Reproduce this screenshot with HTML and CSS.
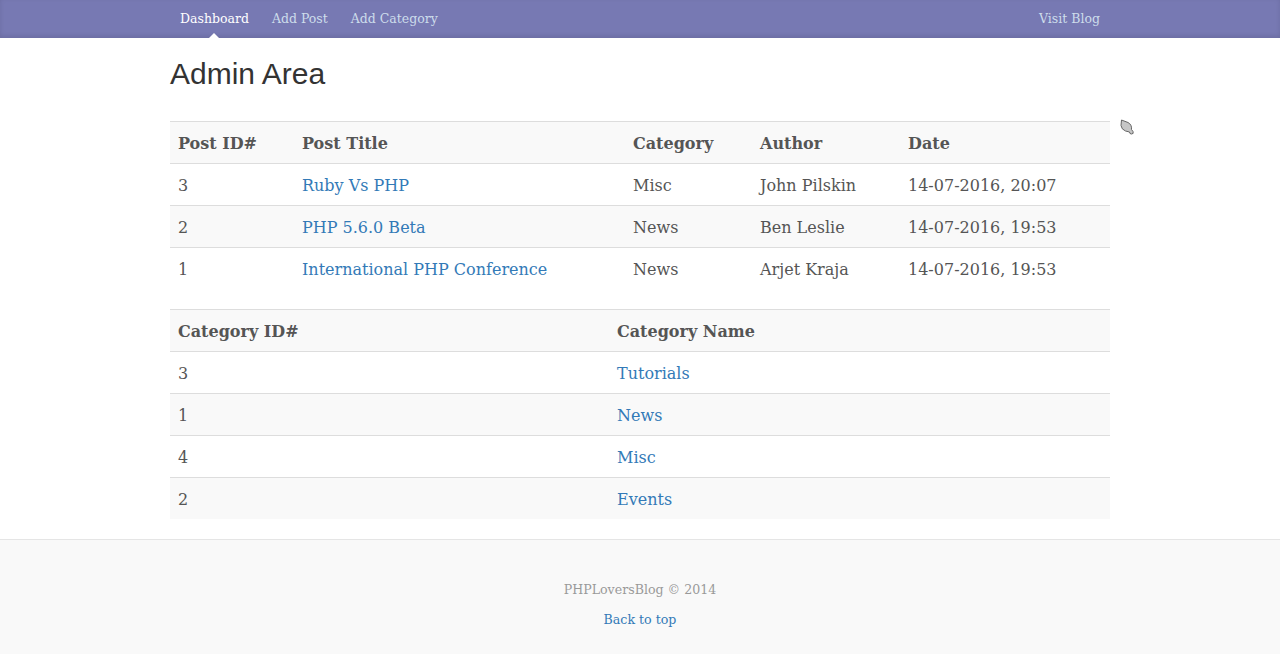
FILE: index.html
```html
<!DOCTYPE html>
<html lang="en">
<head>
<meta charset="utf-8">
<title>Admin Area</title>
<link rel="stylesheet" href="styles.css">
</head>
<body>
<div class="masthead">
  <nav class="container nav">
    <a class="nav-item active" href="#">Dashboard</a>
    <a class="nav-item" href="#">Add Post</a>
    <a class="nav-item" href="#">Add Category</a>
    <a class="nav-item nav-right" href="#">Visit Blog</a>
  </nav>
</div>

<main class="container">
  <h1 class="page-title">Admin Area</h1>

  <table class="table">
    <colgroup>
      <col class="c-id"><col class="c-title"><col class="c-cat"><col class="c-author"><col class="c-date">
    </colgroup>
    <tr><th>Post ID#</th><th>Post Title</th><th>Category</th><th>Author</th><th>Date</th></tr>
    <tr><td>3</td><td><a href="#">Ruby Vs PHP</a></td><td>Misc</td><td>John Pilskin</td><td>14-07-2016, 20:07</td></tr>
    <tr><td>2</td><td><a href="#">PHP 5.6.0 Beta</a></td><td>News</td><td>Ben Leslie</td><td>14-07-2016, 19:53</td></tr>
    <tr><td>1</td><td><a href="#">International PHP Conference</a></td><td>News</td><td>Arjet Kraja</td><td>14-07-2016, 19:53</td></tr>
  </table>

  <table class="table">
    <colgroup>
      <col class="c-catid"><col class="c-catname">
    </colgroup>
    <tr><th>Category ID#</th><th>Category Name</th></tr>
    <tr><td>3</td><td><a href="#">Tutorials</a></td></tr>
    <tr><td>1</td><td><a href="#">News</a></td></tr>
    <tr><td>4</td><td><a href="#">Misc</a></td></tr>
    <tr><td>2</td><td><a href="#">Events</a></td></tr>
  </table>
</main>

<footer class="footer">
  <p>PHPLoversBlog © 2014</p>
  <p><a href="#">Back to top</a></p>
</footer>

<svg class="cursor" width="18" height="22" viewBox="0 0 18 22" aria-hidden="true">
  <path d="M2.5 2 L9 4.5 Q13 6.5 12.5 11.5 L14 13.5 Q15 16 12.5 16 Q10.5 16 10.5 14 L6.5 13 Q2.5 11.5 2 7.5 Z" fill="#c6c6c6" stroke="#666" stroke-width="1"/>
</svg>
</body>
</html>
```

FILE: styles.css
```css
* { box-sizing: border-box; }

body {
  margin: 0;
  font-family: "DejaVu Serif", "Liberation Serif", serif;
  color: #555;
  background: #fff;
}

.container {
  width: 940px;
  margin: 0 auto;
}

.masthead {
  background: #7779b3;
  height: 38px;
  box-shadow: inset 0 -2px 5px rgba(0, 0, 0, 0.1);
}

.nav {
  display: flex;
  gap: 3px;
  height: 38px;
  align-items: stretch;
}

.nav-item {
  position: relative;
  display: block;
  padding: 10px 10px;
  line-height: 18px;
  font-size: 12.5px;
  color: #cdddeb;
  text-decoration: none;
}

.nav-item.active {
  color: #fff;
}

.nav-item.active::after {
  content: "";
  position: absolute;
  bottom: 0;
  left: 50%;
  margin-left: -5px;
  border: 5px solid transparent;
  border-top: 0;
  border-bottom-color: #fff;
}

.nav-right {
  margin-left: auto;
}

.page-title {
  font-family: "Liberation Sans", Arial, sans-serif;
  font-size: 30px;
  font-weight: 400;
  line-height: 33px;
  color: #333;
  margin: 19px 0 31px;
}

.table {
  width: 100%;
  border-collapse: collapse;
  margin-bottom: 20px;
  font-size: 16px;
}

.table th,
.table td {
  text-align: left;
  padding: 9px 8px 7px;
  line-height: 25px;
  border-top: 1px solid #ddd;
  vertical-align: middle;
}

.table th {
  font-weight: bold;
  color: #555;
}

.table tr:nth-child(odd) {
  background: #f9f9f9;
}

.c-id { width: 124px; }
.c-title { width: 331px; }
.c-cat { width: 127px; }
.c-author { width: 148px; }
.c-date { width: 210px; }
.c-catid { width: 439px; }
.c-catname { width: 501px; }

a {
  color: #337ab7;
  text-decoration: none;
}

.footer {
  background: #f9f9f9;
  border-top: 1px solid #e5e5e5;
  padding: 40px 0;
  text-align: center;
  color: #999;
  font-size: 12.6px;
}

.footer p {
  margin: 0 0 10px;
  line-height: 20px;
}

.cursor {
  position: absolute;
  left: 1119px;
  top: 118px;
}
```
